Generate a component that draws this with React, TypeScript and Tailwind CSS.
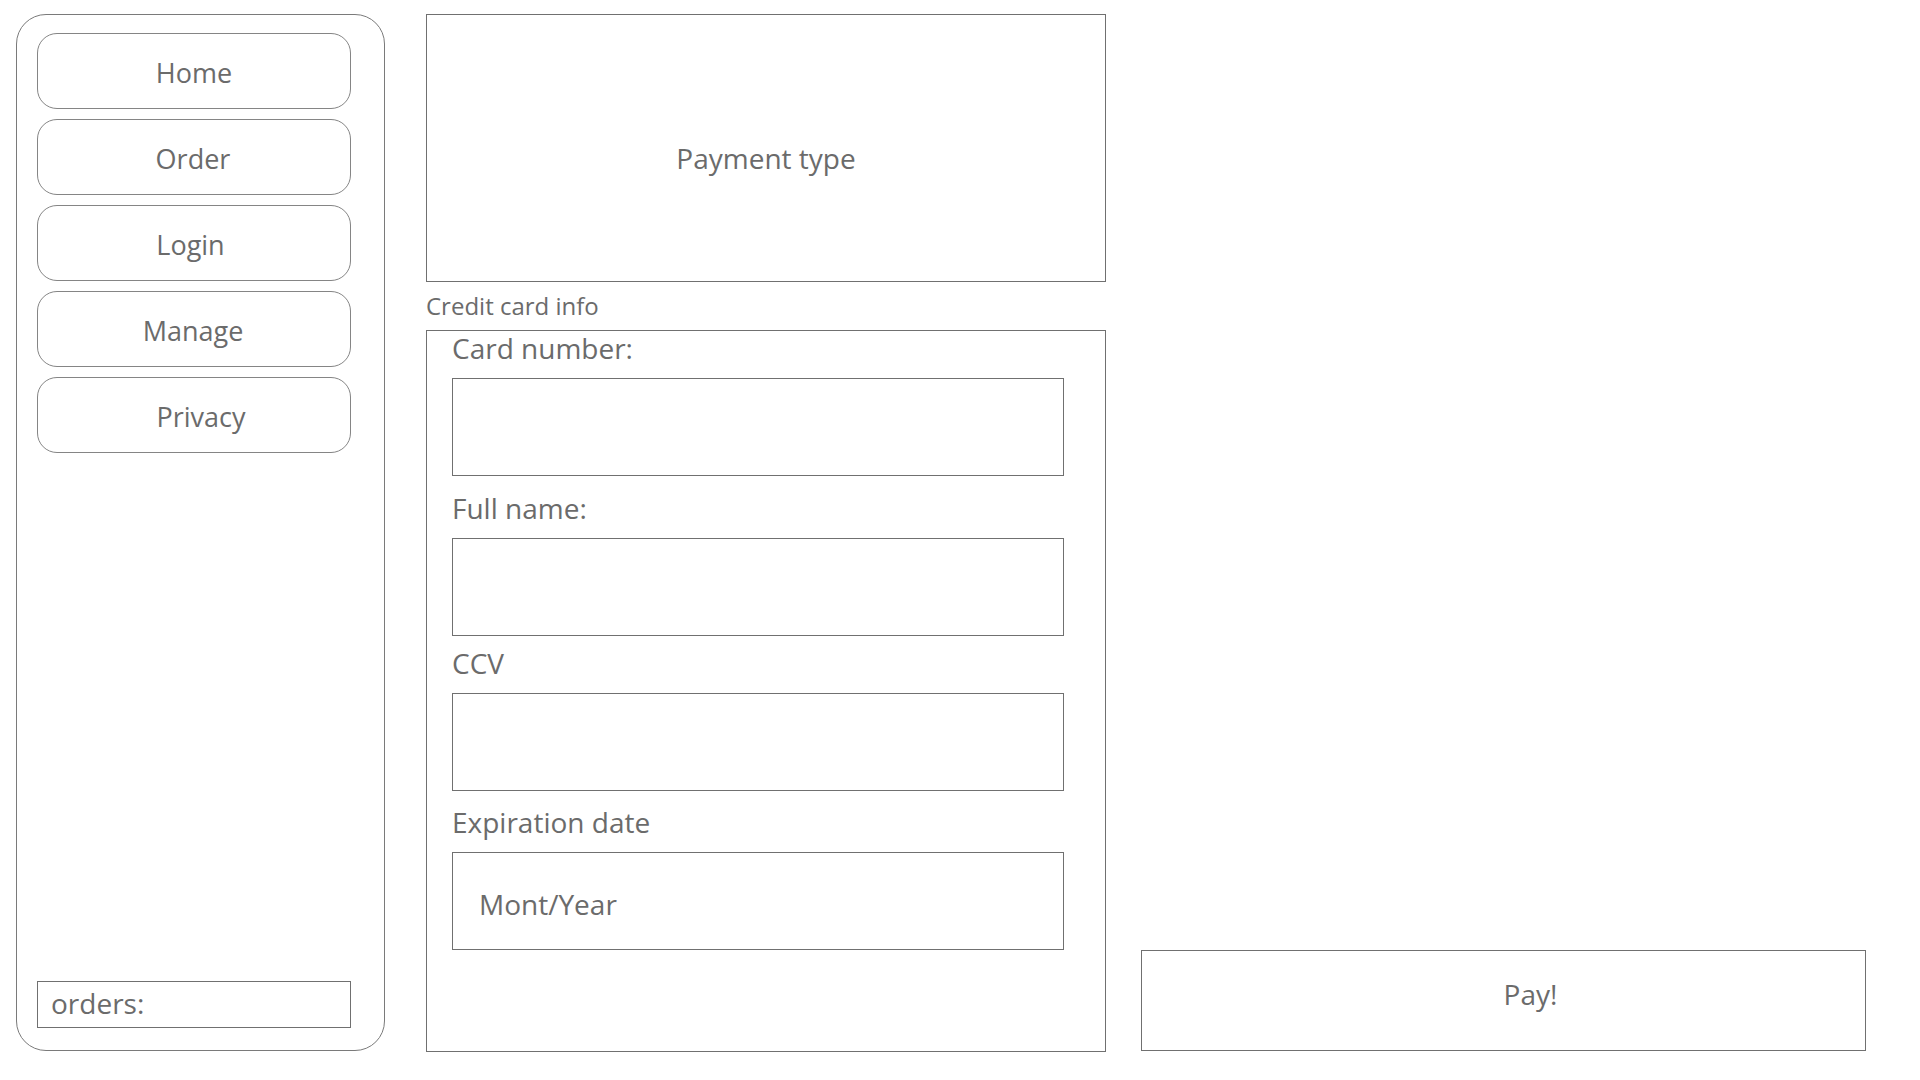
import clsx from 'clsx'

// ─── Sidebar ──────────────────────────────────────────────────────────────────

const navItems = [
  { label: 'Home', shift: '' },
  { label: 'Order', shift: 'pr-[2px]' },
  { label: 'Login', shift: 'pr-[7px]' },
  { label: 'Manage', shift: 'pr-[2px]' },
  { label: 'Privacy', shift: 'pl-[14px]' },
]

function Sidebar() {
  return (
    <aside className="w-[369px] h-[1037px] shrink-0 flex flex-col rounded-[30px] border border-[#7a7a7a] pl-[20px] pr-[32px] pt-[18px] pb-[22px]">
      <nav className="flex flex-col gap-[10px]">
        {navItems.map((item) => (
          <button
            key={item.label}
            className={clsx(
              'h-[76px] w-[314px] flex items-center justify-center rounded-[20px] border border-[#858585] pt-1 text-[27px] text-[#6b6b6b]',
              item.shift
            )}
          >
            {item.label}
          </button>
        ))}
      </nav>
      <div className="mt-auto h-[47px] w-[314px] flex items-center border border-[#707070] pl-[13px] pb-[3px] text-[28px] text-[#6b6b6b]">
        orders:
      </div>
    </aside>
  )
}

// ─── Credit card form ─────────────────────────────────────────────────────────

const fields = [
  { label: 'Card number:', top: 'mt-[2px]' },
  { label: 'Full name:', top: 'mt-[17px]' },
  { label: 'CCV', top: 'mt-[12px]' },
  { label: 'Expiration date', top: 'mt-[16px]', placeholder: 'Mont/Year' },
]

function CardForm() {
  return (
    <div className="h-[722px] border border-[#707070] pl-[25px]">
      {fields.map((f) => (
        <div key={f.label} className={f.top}>
          <div className="leading-[30px] text-[28px] text-[#6b6b6b]">{f.label}</div>
          <div className="mt-[15px] h-[98px] w-[612px] flex items-center border border-[#707070] pl-[26px] pt-[5px] text-[28px] text-[#6b6b6b]">
            {f.placeholder}
          </div>
        </div>
      ))}
    </div>
  )
}

export default function App() {
  return (
    <div className="w-[1920px] h-[1080px] bg-white flex pl-[16px] pt-[14px] font-['Open_Sans','Noto_Sans',sans-serif]">
      <Sidebar />

      <main className="ml-[41px] w-[680px] shrink-0 flex flex-col">
        <div className="h-[268px] flex items-center justify-center border border-[#707070] pt-[20px] text-[28px] text-[#6b6b6b]">
          Payment type
        </div>
        <div className="mt-[7px] mb-[8px] leading-[33px] text-[24px] text-[#6b6b6b]">Credit card info</div>
        <CardForm />
      </main>

      <div className="ml-[35px] h-[1037px] flex flex-col justify-end">
        <button className="h-[101px] w-[725px] flex items-center justify-center border border-[#707070] pl-[54px] pb-[14px] text-[28px] text-[#6b6b6b]">
          Pay!
        </button>
      </div>
    </div>
  )
}
